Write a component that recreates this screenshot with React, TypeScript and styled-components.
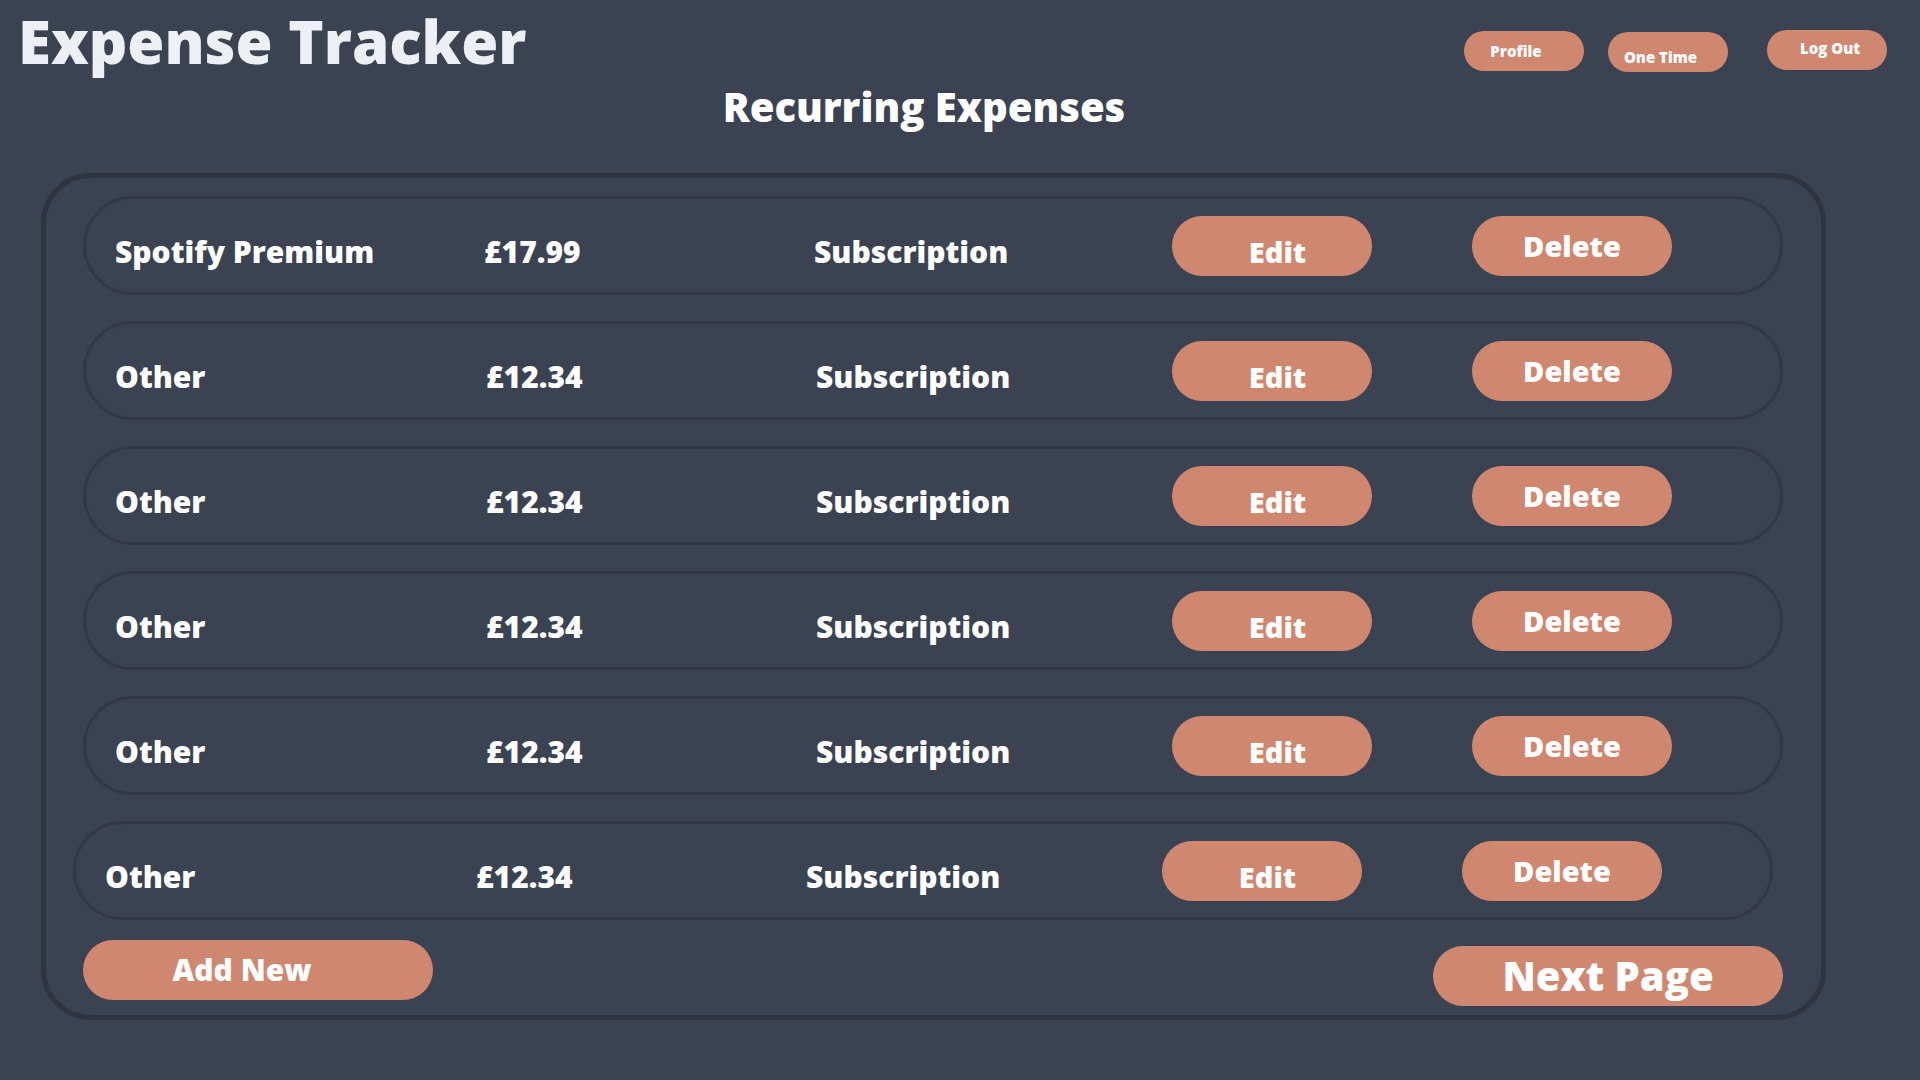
import React from "react";
import styled, { createGlobalStyle } from "styled-components";

const GlobalStyle = createGlobalStyle`
  html, body {
    margin: 0;
    padding: 0;
    background: #3b4252;
  }
  body {
    font-family: "Open Sans", "DejaVu Sans", sans-serif;
    color: #ffffff;
  }
  * { box-sizing: border-box; }
`;

const Page = styled.div`
  width: 1920px;
  height: 1080px;
  background: #3b4252;
  overflow: hidden;
  display: flex;
  flex-direction: column;
`;

const Header = styled.header`
  height: 80px;
  display: flex;
  justify-content: space-between;
  align-items: flex-start;
  padding: 0 33px 0 18px;
`;

const Title = styled.h1`
  margin: 0;
  font-size: 60px;
  line-height: normal;
  font-weight: 800;
  color: #eceff4;
`;

const Nav = styled.nav`
  display: flex;
  align-items: flex-start;
`;

const NavButton = styled.button<{ $mt: number; $ml: number; $pad: string }>`
  width: 120px;
  height: 40px;
  margin-top: ${(p) => p.$mt}px;
  margin-left: ${(p) => p.$ml}px;
  padding: ${(p) => p.$pad};
  border: none;
  border-radius: 20px;
  background: #d08770;
  color: #ffffff;
  font-family: "Open Sans", sans-serif;
  font-weight: 800;
  font-size: 15px;
  line-height: 1;
  display: flex;
  align-items: center;
  justify-content: center;
  cursor: pointer;
`;

const Heading = styled.h2`
  margin: 7px 0 0 41px;
  width: 1785px;
  padding-right: 19px;
  text-align: center;
  font-size: 40px;
  line-height: 1;
  font-weight: 800;
  color: #ffffff;
`;

const Card = styled.section`
  margin: 46px 0 0 41px;
  width: 1785px;
  border: 5px solid #2e3440;
  border-radius: 50px;
  padding: 18px 38px 9px 37px;
  display: flex;
  flex-direction: column;
`;

const List = styled.div`
  display: flex;
  flex-direction: column;
  gap: 26px;
`;

const Row = styled.div<{ $shift?: number }>`
  height: 99px;
  margin-left: ${(p) => -(p.$shift ?? 0)}px;
  margin-right: ${(p) => p.$shift ?? 0}px;
  border: 3px solid #323846;
  border-radius: 50px;
  padding-left: 29px;
  display: grid;
  grid-template-columns: 369px 330px 358px 200px 100px 200px;
  align-items: center;
`;

const Cell = styled.div<{ $dx?: number }>`
  padding-top: 12px;
  padding-left: ${(p) => p.$dx ?? 0}px;
  font-size: 30px;
  line-height: 1.2;
  font-weight: 800;
  color: #ffffff;
  white-space: nowrap;
`;

const ActionButton = styled.button<{ $pad: string }>`
  width: 200px;
  height: 60px;
  border: none;
  border-radius: 30px;
  background: #d08770;
  color: #ffffff;
  font-family: "Open Sans", sans-serif;
  font-weight: 800;
  font-size: 29px;
  line-height: 1;
  padding: ${(p) => p.$pad};
  display: flex;
  align-items: center;
  justify-content: center;
  cursor: pointer;
`;

const Footer = styled.div`
  margin-top: 20px;
  display: flex;
  justify-content: space-between;
  align-items: flex-start;
`;

const WideButton = styled.button<{ $mt: number; $size: number; $pad: string }>`
  width: 350px;
  height: 60px;
  margin-top: ${(p) => p.$mt}px;
  border: none;
  border-radius: 30px;
  background: #d08770;
  color: #ffffff;
  font-family: "Open Sans", sans-serif;
  font-weight: 800;
  font-size: ${(p) => p.$size}px;
  line-height: 1;
  padding: ${(p) => p.$pad};
  display: flex;
  align-items: center;
  justify-content: center;
  cursor: pointer;
`;

type Expense = { name: string; amount: string; kind: string };

const expenses: Expense[] = [
  { name: "Spotify Premium", amount: "£17.99", kind: "Subscription" },
  { name: "Other", amount: "£12.34", kind: "Subscription" },
  { name: "Other", amount: "£12.34", kind: "Subscription" },
  { name: "Other", amount: "£12.34", kind: "Subscription" },
  { name: "Other", amount: "£12.34", kind: "Subscription" },
  { name: "Other", amount: "£12.34", kind: "Subscription" },
];

export default function App() {
  return (
    <>
      <GlobalStyle />
      <Page>
        <Header>
          <Title>Expense Tracker</Title>
          <Nav>
            <NavButton $mt={31} $ml={0} $pad="0 16px 0 0">
              Profile
            </NavButton>
            <NavButton $mt={32} $ml={24} $pad="10px 15px 0 0">
              One Time
            </NavButton>
            <NavButton $mt={30} $ml={39} $pad="0 0 4px 6px">
              Log Out
            </NavButton>
          </Nav>
        </Header>
        <Heading>Recurring Expenses</Heading>
        <Card>
          <List>
            {expenses.map((e, i) => (
              <Row key={i} $shift={i === expenses.length - 1 ? 10 : 0}>
                <Cell>{e.name}</Cell>
                <Cell $dx={i === 0 ? 0 : 2}>{e.amount}</Cell>
                <Cell $dx={i === 0 ? 0 : 2}>{e.kind}</Cell>
                <ActionButton $pad="12px 0 0 11px">Edit</ActionButton>
                <span />
                <ActionButton $pad="0">Delete</ActionButton>
              </Row>
            ))}
          </List>
          <Footer>
            <WideButton $mt={0} $size={30} $pad="0 32px 0 0">
              Add New
            </WideButton>
            <WideButton $mt={6} $size={40} $pad="0">
              Next Page
            </WideButton>
          </Footer>
        </Card>
      </Page>
    </>
  );
}
